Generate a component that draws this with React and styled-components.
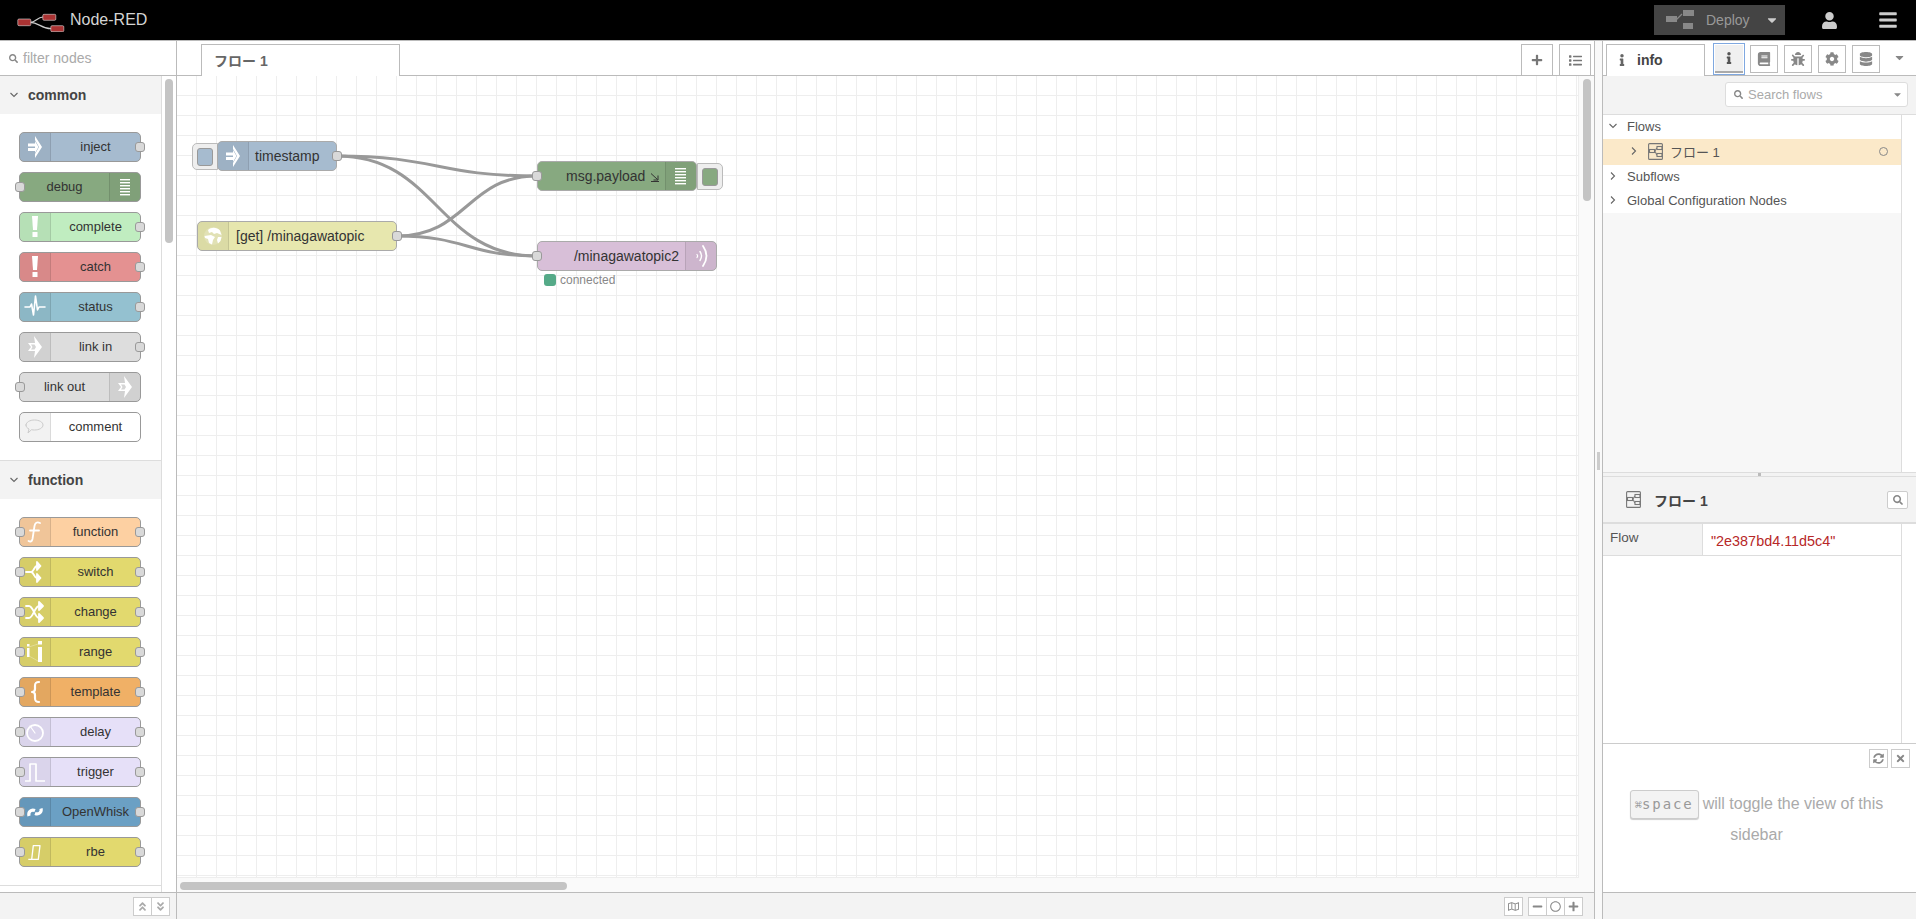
import React from "react";
import styled, { createGlobalStyle } from "styled-components";
import {
  FaInfo, FaBook, FaBug, FaCog, FaDatabase, FaList, FaPlus, FaUser, FaBars, FaSearch,
  FaCaretDown, FaRegMap, FaMinus, FaRegCircle, FaSyncAlt,
  FaTimes, FaAngleDoubleUp, FaAngleDoubleDown,
} from "react-icons/fa";

const SANS = `"Liberation Sans", Arial, "Noto Sans CJK JP", sans-serif`;

const Global = createGlobalStyle`
  html, body { margin: 0; padding: 0; height: 100%; overflow: hidden; background: #fff; }
  body { font-family: ${SANS}; font-size: 14px; color: #555; }
  * { box-sizing: border-box; }
`;

const Page = styled.div`
  width: 1916px; height: 919px; display: flex; flex-direction: column; overflow: hidden;
`;

/* ---------- header ---------- */
const Header = styled.header`
  height: 41px; flex: none; background: #000; border-bottom: 1px solid #bbb;
  display: flex; align-items: center; padding: 0 18px 0 17px;
`;
const Brand = styled.div`
  display: flex; align-items: center; gap: 5px; color: #d4d4d4; font-size: 16px; flex: 1;
`;
const DeployButton = styled.div`
  width: 131px; height: 30px; background: #444; display: flex; align-items: center;
  color: #999; font-size: 14px; padding: 0 6px 0 12px;
`;
const DeployLabel = styled.span` margin-left: 12px; flex: 1; `;
const HeaderIcon = styled.div`
  color: #ccc; display: flex; margin-left: ${(p) => p.$ml}px; font-size: ${(p) => p.$size}px;
`;

/* ---------- layout ---------- */
const Main = styled.main` flex: 1; display: flex; min-height: 0; `;

/* ---------- palette ---------- */
const Palette = styled.aside`
  width: 177px; flex: none; border-right: 1px solid #bbb; display: flex; flex-direction: column;
`;
const FilterRow = styled.div`
  height: 35px; flex: none; border-bottom: 1px solid #bbb; display: flex; align-items: center;
  padding-left: 9px; gap: 5px; color: #aaa; font-size: 14px;
`;
const PaletteBody = styled.div` flex: 1; position: relative; overflow: hidden; min-height: 0; `;
const PaletteList = styled.div`
  width: 162px; height: 100%; border-right: 1px solid #ddd; overflow: hidden;
`;
const Category = styled.section` border-top: ${(p) => (p.$first ? "0" : "1px solid #ddd")}; `;
const CategoryHead = styled.div`
  height: 38px; background: #f3f3f3; display: flex; align-items: center;
  padding: 0 0 0 9px; gap: 9px; font-weight: bold; font-size: 14px; color: #444;
`;
const NodeStack = styled.div`
  padding: 18px 0 18px 19px; display: flex; flex-direction: column; gap: 10px;
`;
const PaletteNode = styled.div`
  position: relative; width: 122px; height: 30px; border: 1px solid #999; border-radius: 5px;
  background: ${(p) => p.$color}; display: flex; align-items: center;
  flex-direction: ${(p) => (p.$iconRight ? "row-reverse" : "row")}; color: #333; font-size: 13px;
`;
const IconCell = styled.div`
  width: 31px; height: 100%; flex: none; background: rgba(0,0,0,.05); display: flex;
  align-items: center; justify-content: center; color: #fff;
  ${(p) => (p.$right ? "border-left" : "border-right")}: 1px solid rgba(0,0,0,.1);
  border-radius: ${(p) => (p.$right ? "0 4px 4px 0" : "4px 0 0 4px")};
`;
const NodeLabel = styled.span` flex: 1; text-align: center; white-space: nowrap; padding-bottom: 1px; `;
const Port = styled.span`
  position: absolute; top: 50%; margin-top: -5px; ${(p) => p.$side}: -5px; width: 10px; height: 10px;
  background: #d9d9d9; border: 1px solid #999; border-radius: 3px;
`;
const Thumb = styled.div`
  position: absolute; background: #c4c4c4; border-radius: 4px;
  ${(p) => p.$css}
`;
const BarFooter = styled.footer`
  height: 27px; flex: none; background: #f3f3f3; border-top: 1px solid #bbb; display: flex;
  align-items: center; justify-content: flex-end; padding-right: ${(p) => p.$pr}px; gap: 5px;
`;
const ButtonGroup = styled.div` display: flex; `;
const SmallButton = styled.div`
  width: ${(p) => p.$w || 19}px; height: 19px; background: #fff; border: 1px solid #ccc; color: #888;
  display: flex; align-items: center; justify-content: center; font-size: 11px;
  & + & { margin-left: -1px; }
`;

/* ---------- workspace ---------- */
const Workspace = styled.section` flex: 1; min-width: 0; display: flex; flex-direction: column; `;
const TabBar = styled.div`
  height: 35px; flex: none; border-bottom: 1px solid #bbb; display: flex; align-items: flex-end;
  padding: 0 3px 0 24px; position: relative;
`;
const Tab = styled.div`
  width: 199px; height: 32px; margin-bottom: -1px; background: #fff; border: 1px solid #bbb;
  border-bottom: 0; padding: 0 0 1px 12px; display: flex; align-items: center; font-weight: bold;
  color: #666; font-size: 14px;
`;
const TabSpacer = styled.div` flex: 1; `;
const TabButton = styled.div`
  width: 32px; height: 31px; margin-left: 6px; border: 1px solid #bbb; border-bottom: 0;
  display: flex; align-items: center; justify-content: center; color: #777; font-size: 13px;
`;
const Chart = styled.div`
  flex: 1; min-height: 0; position: relative; background: #fafafa; padding: 0 15px 14px 0;
`;
const Grid = styled.div`
  position: relative; width: 100%; height: 100%; background-color: #fff;
  border-right: 1px solid #eee; border-bottom: 1px solid #eee;
  background-image:
    linear-gradient(to right, transparent 19px, #eee 19px),
    linear-gradient(to bottom, transparent 19px, #eee 19px);
  background-size: 20px 20px;
`;
const Wires = styled.svg` position: absolute; left: 0; top: 0; width: 100%; height: 100%; `;
const FlowNode = styled.div`
  position: absolute; left: ${(p) => p.$x}px; top: ${(p) => p.$y}px; width: ${(p) => p.$w}px; height: 30px;
  background: ${(p) => p.$color}; border: 1px solid #aaa; border-radius: 5px; display: flex;
  align-items: center; flex-direction: ${(p) => (p.$iconRight ? "row-reverse" : "row")};
  color: #333; font-size: 14px;
`;
const FlowLabel = styled.span`
  flex: 1; padding: ${(p) => p.$pad}; text-align: ${(p) => p.$align || "left"}; white-space: nowrap;
  margin-bottom: 1px; display: flex; align-items: center; justify-content: ${(p) => (p.$align === "right" ? "flex-end" : "flex-start")};
`;
const NodeButton = styled.div`
  position: absolute; left: ${(p) => p.$x}px; top: ${(p) => p.$y}px; width: 26px; height: 27px;
  background: #eee; border: 1px solid #bbb; border-radius: ${(p) => p.$radius};
  display: flex; align-items: center; justify-content: ${(p) => (p.$fillEnd ? "flex-end" : "flex-start")};
  padding: 0 4px;
`;
const NodeButtonFill = styled.div`
  width: 16px; height: 18px; background: ${(p) => p.$color}; border: 1px solid #999; border-radius: 3px;
`;
const FlowPort = styled.span`
  position: absolute; left: ${(p) => p.$x}px; top: ${(p) => p.$y}px; width: 10px; height: 10px;
  background: #d9d9d9; border: 1px solid #999; border-radius: 3px;
`;
const StatusRow = styled.div`
  position: absolute; left: ${(p) => p.$x}px; top: ${(p) => p.$y}px; display: flex; align-items: center;
  gap: 4px; font-size: 12px; color: #888;
`;
const StatusDot = styled.span` width: 12px; height: 12px; border-radius: 3px; background: #55aa88; `;

/* ---------- separator ---------- */
const Separator = styled.div`
  width: 9px; flex: none; background: #f9f9f9; border-right: 1px solid #bbb; border-left: 1px solid #bbb;
  position: relative;
`;
const Grip = styled.div`
  position: absolute; left: 2px; top: 411px; width: 3px; height: 18px; background: #ccc;
`;

/* ---------- sidebar ---------- */
const Sidebar = styled.aside` width: 313px; flex: none; display: flex; flex-direction: column; `;
const SideTabs = styled.div`
  height: 35px; flex: none; border-bottom: 1px solid #bbb; display: flex; align-items: flex-end;
  padding-left: 3px; position: relative;
`;
const SideTab = styled.div`
  width: 99px; height: 32px; margin-bottom: -1px; background: #fff; border: 1px solid #bbb; border-bottom: 0;
  display: flex; align-items: center; font-weight: bold; color: #444; font-size: 14px; padding: 0 0 1px 9px; gap: 9px;
`;
const SideTabIcon = styled.span` color: #666; display: flex; font-size: 12px; `;
const IconTab = styled.div`
  width: 28px; height: 28px; border: 1px solid #bbb; margin: 0 0 2px 6px; display: flex;
  align-items: center; justify-content: center; color: #888; font-size: 14px; background: #fff;
`;
const ActiveIconTab = styled.div`
  width: 32px; height: 32px; margin: 0 -1px 0 8px; border: 1px solid #7fa8e0; padding: 1px; display: flex;
`;
const ActiveIconInner = styled.div`
  flex: 1; background: #f0f0f0; border-bottom: 2px solid #aaa; color: #555; font-size: 12px; display: flex;
  align-items: center; justify-content: center;
`;
const SideCaret = styled.div`
  color: #888; font-size: 13px; display: flex; margin: 0 0 11px 13px; height: 13px;
`;
const SearchRow = styled.div`
  height: 39px; flex: none; background: #f3f3f3; border-bottom: 1px solid #ddd; display: flex;
  align-items: flex-start; justify-content: flex-end; padding: 6px 8px 0 0;
`;
const SearchBox = styled.div`
  width: 183px; height: 25px; background: #fff; border: 1px solid #ddd; border-radius: 3px; display: flex;
  align-items: center; padding: 0 4px 1px 8px; gap: 5px; color: #aaa; font-size: 13px;
`;
const SearchText = styled.span` flex: 1; `;
const TreeArea = styled.div`
  height: 357px; flex: none; display: flex; flex-direction: column; background: #f7f7f7;
  border-right: 1px solid #ddd; width: 299px;
`;
const Rows = styled.div` background: #fff; `;
const TreeRow = styled.div`
  height: ${(p) => p.$h || 24}px; display: flex; align-items: center; font-size: 13px; color: #555;
  padding: 0 0 2px ${(p) => p.$indent}px; background: ${(p) => (p.$selected ? "#fbe9c9" : "transparent")};
`;
const Chevron = styled.span` width: 19px; display: flex; flex: none; `;
const RowText = styled.span` flex: 1; margin-left: ${(p) => p.$ml || 0}px; `;
const RowDot = styled.span` width: 9px; height: 9px; border: 1px solid #888; border-radius: 50%; margin-right: 13px; `;
const PaneSplit = styled.div`
  height: 5px; flex: none; background: #f3f3f3; border-top: 1px solid #ddd; border-bottom: 1px solid #ddd;
  position: relative;
`;
const SplitGrip = styled.div`
  position: absolute; left: 155px; top: 0; width: 3px; height: 3px; background: #bbb;
`;
const InfoHead = styled.div`
  height: 47px; flex: none; background: #f3f3f3; border-bottom: 2px solid #ddd; display: flex;
  align-items: center; padding: 0 8px 0 23px; gap: 13px; font-weight: bold; color: #444; font-size: 14px;
`;
const InfoTitle = styled.span` flex: 1; `;
const InfoSearch = styled.div`
  width: 21px; height: 18px; background: #fff; border: 1px solid #ccc; border-radius: 2px; color: #888;
  font-size: 10px; display: flex; align-items: center; justify-content: center;
`;
const InfoBody = styled.div`
  height: 219px; flex: none; width: 299px; border-right: 1px solid #ddd;
`;
const InfoRow = styled.div`
  height: 32px; display: flex; border-bottom: 1px solid #ddd;
`;
const InfoKey = styled.div`
  width: 100px; background: #f3f3f3; border-right: 1px solid #ddd; font-size: 13.5px; color: #555;
  padding: 6px 0 0 7px;
`;
const InfoValue = styled.div` flex: 1; color: #b72828; font-size: 14.4px; padding: 9px 0 0 8px; `;
const Tips = styled.div`
  flex: 1; min-height: 0; border-top: 1px solid #ccc; position: relative; text-align: center;
  color: #aaa; font-size: 16px; line-height: 31px; padding: 44px 30px 0 24px;
`;
const TipButtons = styled.div`
  position: absolute; right: 6px; top: 5px; display: flex; gap: 4px;
`;
const Kbd = styled.kbd`
  display: inline-block; font-family: "DejaVu Sans Mono", "Liberation Mono", monospace; font-size: 14px;
  line-height: 27px; height: 29px; padding: 0 4px; margin-right: 4px; background: #f3f3f3;
  border: 1px solid #ccc; border-radius: 3px; box-shadow: 0 1px 1px #ccc; color: #999; letter-spacing: 1.9px;
`;
const KbdGlyph = styled.span` font-size: 12px; letter-spacing: 0; `;

/* ---------- drawn icons ---------- */
const Glyph = ({ children, w = 22, h = 26, vb = "0 0 22 26", stroke = false, color = "#fff" }) => (
  <svg width={w} height={h} viewBox={vb} fill={stroke ? "none" : color} stroke={stroke ? color : "none"}
    strokeWidth={stroke ? 1.8 : 0} strokeLinecap="round" strokeLinejoin="round">{children}</svg>
);

const Logo = () => (
  <svg width="48" height="24" viewBox="0 0 48 24">
    <path d="M13 14.300C19 14.300 20 9 26 9M13 14.300C22 14.300 24 20.700 34 20.700" fill="none" stroke="#ccc" strokeWidth="1.200" />
    <rect x="0.800" y="11" width="13" height="6.700" rx="1.200" fill="#a33" stroke="#ddd" strokeWidth=".6" />
    <rect x="25.800" y="6.300" width="13" height="6" rx="1.200" fill="#a33" stroke="#ddd" strokeWidth=".6" />
    <rect x="33.800" y="17.700" width="13" height="6" rx="1.200" fill="#a33" stroke="#ddd" strokeWidth=".6" />
  </svg>
);
const DeployIcon = () => (
  <svg width="28" height="20" viewBox="0 0 28 20" fill="#888">
    <rect x="0" y="6" width="11" height="6" />
    <rect x="17" y="0" width="11" height="6" />
    <rect x="17" y="13" width="10" height="6" />
    <path d="M10 10 L16 4" stroke="#888" strokeWidth="1.200" />
  </svg>
);
const FlowIcon = () => (
  <svg width="15" height="17" viewBox="0 0 15 17" fill="none" stroke="#777" strokeWidth="1.100">
    <rect x="0.600" y="0.600" width="13.800" height="15.800" rx="1" />
    <rect x="1.500" y="6.500" width="5" height="3" />
    <rect x="9" y="3.500" width="5" height="3" />
    <rect x="9" y="10.500" width="5" height="3" />
    <path d="M6.500 8C8 8 8 5 9 5M6.500 8C8 8 8 12 9 12" />
  </svg>
);
const ThinChevron = ({ open }) => (
  <svg width="10" height="10" viewBox="0 0 10 10" fill="none" stroke="#666" strokeWidth="1.100">
    <path d={open ? "M1.500 3l3.500 3.500L8.500 3" : "M3 1.500L6.500 5 3 8.500"} />
  </svg>
);
const GlobeIcon = () => (
  <svg width="20" height="20" viewBox="0 0 20 20" fill="#fff">
    <circle cx="10" cy="10" r="9" opacity=".18" />
    <path d="M5 4C8 1 14 1 17 4.500L18.500 9L14 7L11 8L9 6L6 7Z" />
    <path d="M1.500 10L8 9L12 11L10 14L9 18.500L6 17L5 13L2 12Z" />
    <path d="M15 11h3.500l-1 4-2.500 2.500-1-3.500Z" />
  </svg>
);
const InjectIcon = () => (
  <Glyph>
    <rect x="4" y="9.500" width="8" height="3" />
    <rect x="4" y="14" width="8" height="3" />
    <path d="M11 2l7 11-7 11v-4l4-7-4-7z" />
    <path d="M11 7l3.500 6-3.500 6z" />
  </Glyph>
);
const DebugIcon = () => (
  <Glyph>
    {[5, 8, 11, 14, 17, 20].map((y) => <rect key={y} x="6" y={y} width="10" height="1.400" />)}
  </Glyph>
);
const BangIcon = () => (
  <Glyph>
    <path d="M8 2h6l-1 14h-4z" />
    <rect x="8.500" y="18" width="5" height="5" />
  </Glyph>
);
const StatusIcon = () => (
  <Glyph>
    <path d="M1 13h5l1.500-3 2 11 2-19 2 14 1.500-3h6" fill="none" stroke="#fff" strokeWidth="1.600" />
  </Glyph>
);
const LinkIcon = () => (
  <Glyph>
    <path d="M10 2l8 11-8 11 1-7H4l3-4-3-4h7z" />
    <path d="M7 10.500h3.500l1.500 2.500-1.500 2.500H7l1.500-2.500z" fill="#d5d5d5" />
  </Glyph>
);
const CommentIcon = () => (
  <Glyph w="20" h="20" vb="0 0 20 20" stroke color="#ccc">
    <path d="M1 8c0-3 4-5 8.500-5S18 5 18 8s-4 5-8.500 5c-1 0-2 0-3-.3L3 16l1-4C2 11 1 10 1 8z" strokeWidth="1" />
  </Glyph>
);
const FunctionIcon = () => (
  <Glyph stroke>
    <path d="M16 4c-3-1.500-5 0-5.500 3l-2 13c-.5 2.500-2 3-4 2" />
    <path d="M6 11.500h9" />
  </Glyph>
);
const SwitchIcon = () => (
  <Glyph stroke>
    <path d="M2 13h5c3 0 3-6 6-6h2M7 13c3 0 3 6 6 6h2" />
    <path d="M13 3l3.500 4-3.500 4zM13 15l3.500 4-3.500 4z" fill="#fff" />
  </Glyph>
);
const ChangeIcon = () => (
  <Glyph stroke>
    <path d="M2 7h3c4 0 6 12 10 12h1M2 19h3c4 0 6-12 10-12h1" />
    <path d="M15 3l4 4-4 4zM15 15l4 4-4 4z" fill="#fff" />
  </Glyph>
);
const RangeIcon = () => (
  <Glyph>
    <rect x="3" y="9" width="2.500" height="9" />
    <rect x="3" y="5" width="2.500" height="2.500" />
    <rect x="14" y="8" width="4" height="15" />
    <rect x="14" y="2" width="4" height="3.500" />
    <path d="M5 17l9 5" stroke="#fff" strokeWidth=".5" opacity=".6" />
    <path d="M5 8l9-3" stroke="#fff" strokeWidth=".5" opacity=".6" />
  </Glyph>
);
const TemplateIcon = () => (
  <Glyph stroke>
    <path d="M15 3c-4 0-4 2-4 4v3c0 2-1 3-3 3 2 0 3 1 3 3v3c0 2 0 4 4 4" strokeWidth="2.200" />
  </Glyph>
);
const DelayIcon = () => (
  <Glyph stroke>
    <circle cx="11" cy="14" r="8" />
    <path d="M6 7l5 7" strokeWidth="1.200" />
  </Glyph>
);
const TriggerIcon = () => (
  <Glyph stroke>
    <path d="M1 22h5V5h6v17h9" strokeWidth="1.700" strokeLinecap="butt" />
  </Glyph>
);
const WhiskIcon = () => (
  <Glyph>
    <g fill="none" stroke="#fff" strokeWidth="3.200" strokeLinecap="butt">
      <path d="M5 17C4 13 7 10 11 11.500" />
      <path d="M17 9.500C18 13 15 16 11 14.500" />
    </g>
  </Glyph>
);
const RbeIcon = () => (
  <Glyph stroke>
    <path d="M4.300 20.300H14.300L16 6.700H9.300L7.700 20.300" strokeWidth="1.300" strokeLinecap="butt" />
  </Glyph>
);
const MqttIcon = () => (
  <Glyph>
    <g fill="none" stroke="#fff" strokeLinecap="round">
      <path d="M7 11.500c.8 1 .8 2 0 3" strokeWidth="1.200" />
      <path d="M10 8.500c2 3 2 6 0 9" strokeWidth="1.400" />
      <path d="M13 3c4.500 6.500 4.500 13.500 0 20" strokeWidth="1.800" />
    </g>
  </Glyph>
);
const SmallDebug = () => (
  <Glyph>
    {[5, 8, 11, 14, 17, 20].map((y) => <rect key={y} x="5" y={y} width="11" height="1.400" />)}
  </Glyph>
);
const OutputMark = () => (
  <svg width="10" height="10" viewBox="0 0 10 10" fill="none" stroke="#333" strokeWidth="1" style={{ marginLeft: 5, marginTop: 3 }}>
    <path d="M1 1.500L7.500 7.500M8 3.500V8H3.500M1 9.500h8" />
  </svg>
);

/* ---------- data ---------- */
const common = [
  { label: "inject", color: "#a6bbcf", icon: InjectIcon, out: true },
  { label: "debug", color: "#87a980", icon: DebugIcon, inp: true, right: true },
  { label: "complete", color: "#c0edc0", icon: BangIcon, out: true },
  { label: "catch", color: "#e49191", icon: BangIcon, out: true },
  { label: "status", color: "#94c1d0", icon: StatusIcon, out: true },
  { label: "link in", color: "#dddddd", icon: LinkIcon, out: true },
  { label: "link out", color: "#dddddd", icon: LinkIcon, inp: true, right: true },
  { label: "comment", color: "#ffffff", icon: CommentIcon },
];
const functions = [
  { label: "function", color: "#fdd0a2", icon: FunctionIcon, inp: true, out: true },
  { label: "switch", color: "#e2d96e", icon: SwitchIcon, inp: true, out: true },
  { label: "change", color: "#e2d96e", icon: ChangeIcon, inp: true, out: true },
  { label: "range", color: "#e2d96e", icon: RangeIcon, inp: true, out: true },
  { label: "template", color: "#f0b066", icon: TemplateIcon, inp: true, out: true },
  { label: "delay", color: "#e6e0f8", icon: DelayIcon, inp: true, out: true },
  { label: "trigger", color: "#e6e0f8", icon: TriggerIcon, inp: true, out: true },
  { label: "OpenWhisk", color: "#6ba0c4", icon: WhiskIcon, inp: true, out: true },
  { label: "rbe", color: "#e2d96e", icon: RbeIcon, inp: true, out: true },
];

const PNode = ({ n }) => {
  const Icon = n.icon;
  return (
    <PaletteNode $color={n.color} $iconRight={n.right}>
      <IconCell $right={n.right}><Icon /></IconCell>
      <NodeLabel>{n.label}</NodeLabel>
      {n.inp && <Port $side="left" />}
      {n.out && <Port $side="right" />}
    </PaletteNode>
  );
};

const wire = (x1, y1, x2, y2) => {
  const d = Math.max(60, (x2 - x1) * 0.5);
  return `M${x1} ${y1}C${x1 + d} ${y1} ${x2 - d} ${y2} ${x2} ${y2}`;
};
const wireList = [
  [160, 80, 360, 100],
  [160, 80, 360, 180],
  [220, 160, 360, 100],
  [220, 160, 360, 180],
];

export default function App() {
  return (
    <Page>
      <Global />
      <Header>
        <Brand><Logo /> Node-RED</Brand>
        <DeployButton>
          <DeployIcon />
          <DeployLabel>Deploy</DeployLabel>
          <FaCaretDown size={14} color="#ccc" />
        </DeployButton>
        <HeaderIcon $ml={36} $size={17}><FaUser /></HeaderIcon>
        <HeaderIcon $ml={40} $size={20}><FaBars /></HeaderIcon>
      </Header>
      <Main>
        <Palette>
          <FilterRow><FaSearch size={9} color="#888" /><span>filter nodes</span></FilterRow>
          <PaletteBody>
            <PaletteList>
              <Category $first>
                <CategoryHead><ThinChevron open /> common</CategoryHead>
                <NodeStack>{common.map((n) => <PNode key={n.label} n={n} />)}</NodeStack>
              </Category>
              <Category>
                <CategoryHead><ThinChevron open /> function</CategoryHead>
                <NodeStack>{functions.map((n) => <PNode key={n.label} n={n} />)}</NodeStack>
              </Category>
              <Category />
            </PaletteList>
            <Thumb $css="left: 165px; top: 3px; width: 8px; height: 164px;" />
          </PaletteBody>
          <BarFooter $pr={6}>
            <ButtonGroup>
              <SmallButton><FaAngleDoubleUp color="#aaa" /></SmallButton>
              <SmallButton><FaAngleDoubleDown color="#aaa" /></SmallButton>
            </ButtonGroup>
          </BarFooter>
        </Palette>

        <Workspace>
          <TabBar>
            <Tab>フロー 1</Tab>
            <TabSpacer />
            <TabButton><FaPlus size={12} /></TabButton>
            <TabButton><FaList size={13} /></TabButton>
          </TabBar>
          <Chart>
            <Grid>
              <Wires>
                {wireList.map((w, i) => (
                  <path key={i} d={wire(...w)} fill="none" stroke="#999" strokeWidth="3" />
                ))}
              </Wires>
              <NodeButton $x={15} $y={67} $radius="5px 0 0 5px"><NodeButtonFill $color="#a6bbcf" /></NodeButton>
              <FlowNode $x={40} $y={65} $w={120} $color="#a6bbcf">
                <IconCell><InjectIcon /></IconCell>
                <FlowLabel $pad="0 0 0 6px">timestamp</FlowLabel>
              </FlowNode>
              <FlowPort $x={155} $y={75} />
              <FlowNode $x={20} $y={145} $w={200} $color="#e7e7ae">
                <IconCell><GlobeIcon /></IconCell>
                <FlowLabel $pad="0 0 0 7px">[get] /minagawatopic</FlowLabel>
              </FlowNode>
              <FlowPort $x={215} $y={155} />
              <NodeButton $x={520} $y={87} $radius="0 5px 5px 0" $fillEnd><NodeButtonFill $color="#87a980" /></NodeButton>
              <FlowNode $x={360} $y={85} $w={160} $color="#87a980" $iconRight>
                <IconCell $right><SmallDebug /></IconCell>
                <FlowLabel $pad="0 0 0 28px">msg.payload<OutputMark /></FlowLabel>
              </FlowNode>
              <FlowPort $x={355} $y={95} />
              <FlowNode $x={360} $y={165} $w={180} $color="#d8bfd8" $iconRight>
                <IconCell $right><MqttIcon /></IconCell>
                <FlowLabel $pad="0 6px 0 0" $align="right">/minagawatopic2</FlowLabel>
              </FlowNode>
              <FlowPort $x={355} $y={175} />
              <StatusRow $x={367} $y={197}><StatusDot />connected</StatusRow>
            </Grid>
            <Thumb $css="left: 1406px; top: 3px; width: 8px; height: 122px;" />
            <Thumb $css="left: 3px; top: 806px; width: 387px; height: 8px;" />
          </Chart>
          <BarFooter $pr={11}>
            <SmallButton><FaRegMap /></SmallButton>
            <ButtonGroup>
              <SmallButton><FaMinus /></SmallButton>
              <SmallButton><FaRegCircle /></SmallButton>
              <SmallButton><FaPlus /></SmallButton>
            </ButtonGroup>
          </BarFooter>
        </Workspace>

        <Separator><Grip /></Separator>

        <Sidebar>
          <SideTabs>
            <SideTab><SideTabIcon><FaInfo /></SideTabIcon>info</SideTab>
            <ActiveIconTab><ActiveIconInner><FaInfo /></ActiveIconInner></ActiveIconTab>
            <IconTab><FaBook /></IconTab>
            <IconTab><FaBug /></IconTab>
            <IconTab><FaCog /></IconTab>
            <IconTab><FaDatabase /></IconTab>
            <SideCaret><FaCaretDown /></SideCaret>
          </SideTabs>
          <SearchRow>
            <SearchBox>
              <FaSearch size={9} color="#888" />
              <SearchText>Search flows</SearchText>
              <FaCaretDown size={11} color="#888" />
            </SearchBox>
          </SearchRow>
          <TreeArea>
            <Rows>
              <TreeRow $indent={5}><Chevron><ThinChevron open /></Chevron><RowText>Flows</RowText></TreeRow>
              <TreeRow $indent={26} $h={26} $selected>
                <Chevron><ThinChevron /></Chevron>
                <FlowIcon />
                <RowText $ml={7}>フロー 1</RowText>
                <RowDot />
              </TreeRow>
              <TreeRow $indent={5}><Chevron><ThinChevron /></Chevron><RowText>Subflows</RowText></TreeRow>
              <TreeRow $indent={5}><Chevron><ThinChevron /></Chevron><RowText>Global Configuration Nodes</RowText></TreeRow>
            </Rows>
          </TreeArea>
          <PaneSplit><SplitGrip /></PaneSplit>
          <InfoHead>
            <FlowIcon />
            <InfoTitle>フロー 1</InfoTitle>
            <InfoSearch><FaSearch /></InfoSearch>
          </InfoHead>
          <InfoBody>
            <InfoRow>
              <InfoKey>Flow</InfoKey>
              <InfoValue>"2e387bd4.11d5c4"</InfoValue>
            </InfoRow>
          </InfoBody>
          <Tips>
            <TipButtons>
              <SmallButton><FaSyncAlt /></SmallButton>
              <SmallButton><FaTimes /></SmallButton>
            </TipButtons>
            <Kbd><KbdGlyph>⌘</KbdGlyph>space</Kbd>will toggle the view of this sidebar
          </Tips>
          <BarFooter $pr={0} />
        </Sidebar>
      </Main>
    </Page>
  );
}
